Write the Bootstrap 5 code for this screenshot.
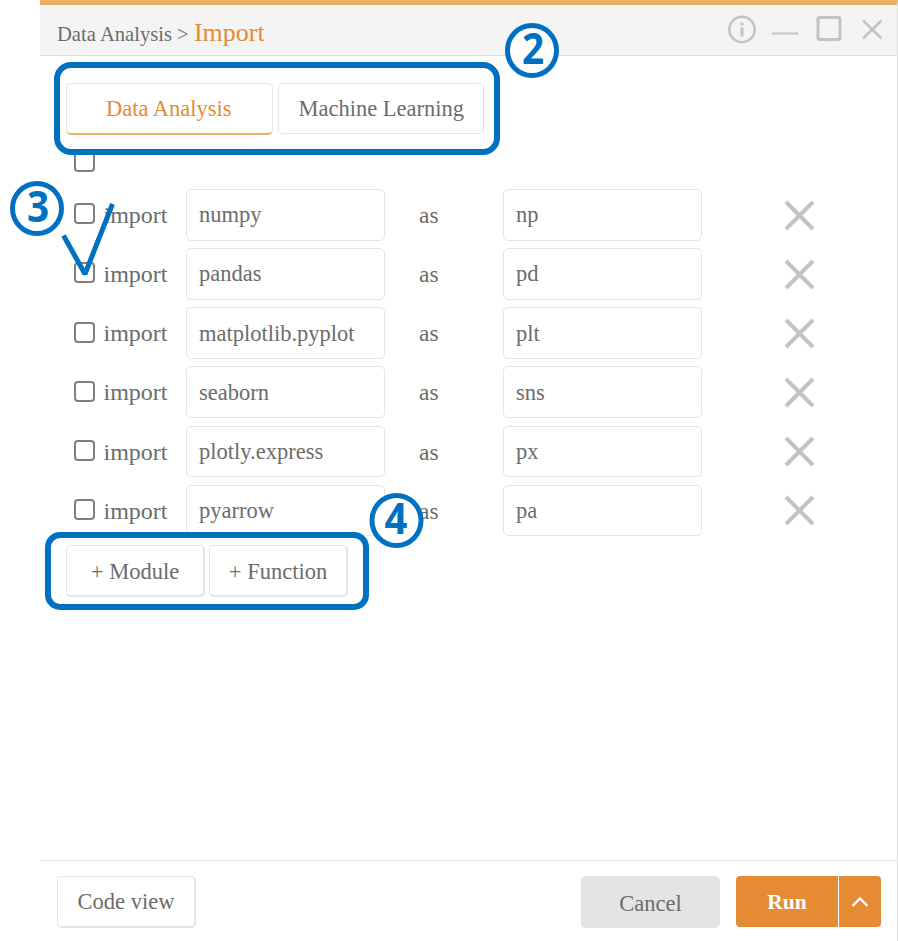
<!DOCTYPE html>
<html lang="en">
<head>
<meta charset="utf-8">
<meta name="viewport" content="width=device-width, initial-scale=1">
<title>Data Analysis - Import</title>
<link href="https://cdn.jsdelivr.net/npm/bootstrap@5.3.0/dist/css/bootstrap.min.css" rel="stylesheet">
<style>
body{font-family:"Liberation Serif","Times New Roman",serif;color:#6c6c6c;background:#fff;font-size:22.5px;line-height:1.2;overflow:hidden}
.stage{width:898px;height:941px}
.popup{margin-left:40px;width:858px;height:941px;border-top:5px solid #ebaf63;border-right:1px solid #dedede}
.title-bar{height:51px;background:#f4f4f4;border-bottom:1px solid #dedede;padding:0 13px 0 17px}
.crumb{font-size:20.6px;white-space:pre;padding-top:12px}
.crumb b{font-weight:400;font-size:26px;color:#e58b33}
.win-icons{height:48px}
.tabs{padding:27px 26px 0;gap:5px}
.tab-btn{width:206.5px;height:51px;border:1.5px solid #e4e4e4;border-radius:5px;background:#fff;color:#6c6c6c;padding:0 0 1px 1px}
.tab-btn.current{color:#e58b33;border-bottom:2.5px solid #ebaf63;height:52px;padding:0 1px 0 0}
.list-area{padding:16px 0 0 26px}
.box-row{height:38px;padding-left:8px}
.chk{width:21px;height:21px;border:2px solid #808080;border-radius:4px;margin:0;appearance:none;background:#fff;display:block}
.import-row{display:grid;grid-template-columns:37.5px 82.5px 199px 118px 199px 1fr;height:59.15px;align-items:start}
.import-row .chk{margin:14.3px 0 0 7.500px}
.word{font-size:24px;line-height:51px;padding-top:1px}
.as{padding-left:34px;font-size:23.5px}
.field{height:51.5px;width:199px;border:1.5px solid #e4e4e4;border-radius:5px;padding:1px 11px 0 12px;font-size:22.5px;color:#6c6c6c;line-height:1.2}
.del{margin:10.500px 0 0 81px;display:block}
.add-row{padding:1px 0 0 26px;gap:4px}
.flat-btn{width:139px;height:52px;border:1.5px solid #e4e4e4;border-bottom-width:2.5px;border-right-width:2.5px;border-radius:5px;background:#fff;color:#6c6c6c;padding:3px 0 0}
.foot{height:81px;border-top:1.5px solid #e0e0e0;padding:15px 16px 0 17px}
.code{padding:0}
.cancel{width:139px;height:52px;background:#e4e4e4;border:0;border-radius:5px;color:#6c6c6c;margin-right:16px;padding:3px 0 0}
.run{height:51px;background:#e58b33;color:#fff;border:0;font-weight:700;font-size:21.5px}
.run-main{width:102px;border-radius:4px 0 0 4px;margin-right:1px;padding:2px 0 0}
.run-more{width:42px;border-radius:0 4px 4px 0}
.callouts{left:0;top:0;pointer-events:none}
</style>
<script src="https://cdn.jsdelivr.net/npm/bootstrap@5.3.0/dist/js/bootstrap.bundle.min.js"></script>
</head>
<body>
<div class="stage position-relative">
<div class="popup d-flex flex-column">
  <header class="title-bar d-flex justify-content-between">
    <div class="crumb d-flex align-items-baseline"><span>Data Analysis &gt; </span><b>Import</b></div>
    <svg class="win-icons" width="158" height="48" viewBox="0 0 158 48" fill="none" stroke="#c3c3c3" stroke-width="2.5">
      <circle cx="16" cy="24.5" r="12.7"/><path d="M16 22.5V31.5M16 17.5V20.5" stroke-width="3"/>
      <path d="M46 28.5H72" stroke-width="2"/><rect x="92" y="12.5" width="22" height="22" rx="1.5" stroke-width="3"/>
      <path d="M137 15.500L155.500 33.500M155.500 15.500L137 33.500"/>
    </svg>
  </header>
  <div class="tabs d-flex">
    <button class="tab-btn current">Data Analysis</button>
    <button class="tab-btn">Machine Learning</button>
  </div>
  <main class="list-area">
    <div class="box-row"><input type="checkbox" class="chk"></div>
    <div id="rows"></div>
  </main>
  <div class="add-row d-flex">
    <button class="flat-btn">+ Module</button>
    <button class="flat-btn">+ Function</button>
  </div>
  <footer class="foot d-flex mt-auto">
    <button class="flat-btn code me-auto">Code view</button>
    <button class="cancel">Cancel</button>
    <button class="run run-main">Run</button>
    <button class="run run-more d-flex align-items-center justify-content-center p-0" aria-label="More"><svg width="18" height="12" viewBox="0 0 18 12" fill="none" stroke="#fff" stroke-width="2.3"><path d="M1.500 10L9 2.500L16.500 10"/></svg></button>
  </footer>
</div>
<svg class="callouts position-absolute" width="898" height="941" viewBox="0 0 898 941" fill="none" stroke="#0070c0" stroke-width="6">
  <rect x="57" y="65" width="440" height="87" rx="14"/>
  <rect x="48" y="535" width="318" height="72" rx="12"/>
  <path d="M63.500 235.500L85 274L112.500 204" stroke-width="5" stroke-linejoin="bevel"/>
  <g fill="#fff" stroke-width="5"><ellipse cx="532" cy="50.500" rx="24.500" ry="25"/><ellipse cx="37" cy="208.500" rx="24.500" ry="25"/><ellipse cx="396.500" cy="520.500" rx="24.500" ry="25"/></g>
  <g fill="#0070c0" stroke="none" font-family="Open Sans, sans-serif" font-weight="700" font-size="43" text-anchor="middle"><text transform="translate(533 63.500) scale(.9 1)">2</text><text transform="translate(38 221.500) scale(.9 1)">3</text><text transform="translate(396 533.500) scale(.93 1)">4</text></g>
</svg>
</div>
<script>
const modules=[['numpy','np'],['pandas','pd'],['matplotlib.pyplot','plt'],['seaborn','sns'],['plotly.express','px'],['pyarrow','pa']];
document.getElementById('rows').innerHTML=modules.map(([m,a])=>`<div class="import-row"><input type="checkbox" class="chk"><span class="word">import</span><input class="field" value="${m}"><span class="word as">as</span><input class="field" value="${a}"><svg class="del" width="32" height="32" viewBox="0 0 32 32" fill="none" stroke="#c3c3c3" stroke-width="4"><path d="M3 2L30 29M30 2L3 29"/></svg></div>`).join('');
</script>
</body>
</html>
